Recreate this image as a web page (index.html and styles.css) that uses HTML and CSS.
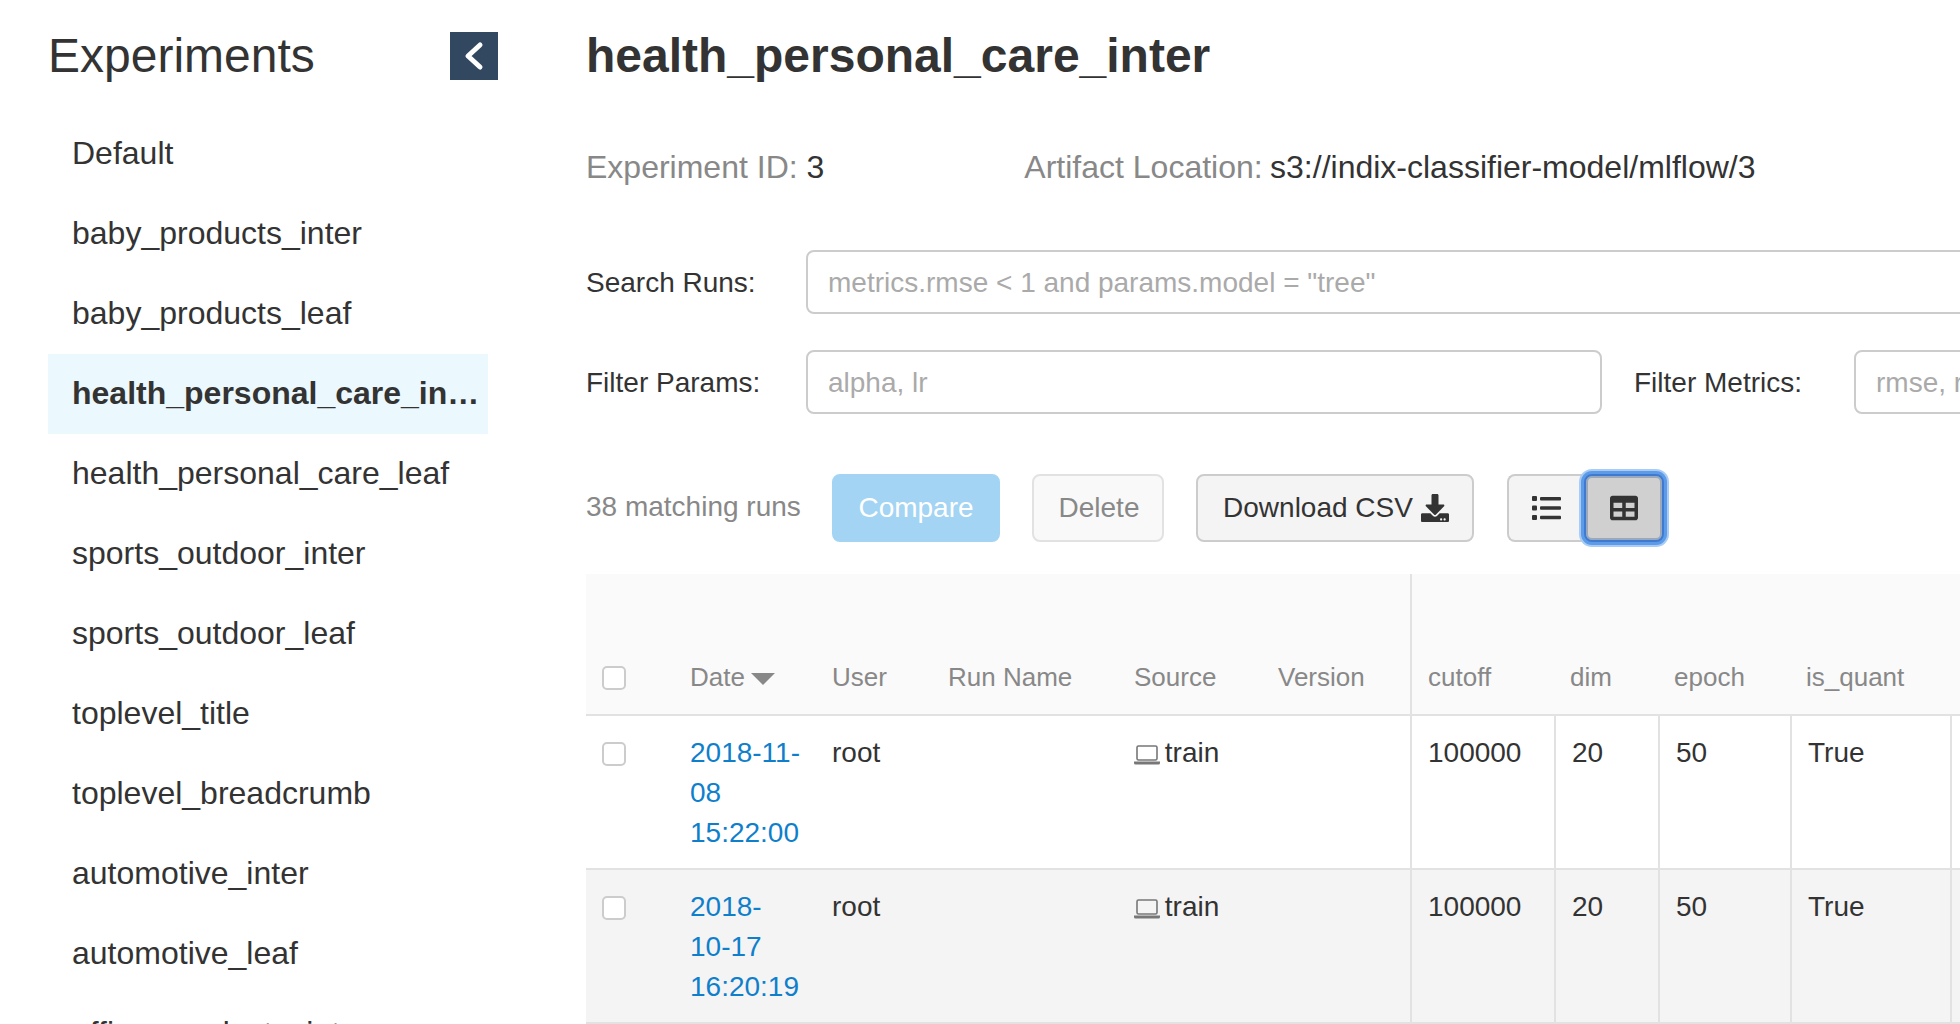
FILE: index.html
```html
<!DOCTYPE html>
<html lang="en">
<head>
    <meta charset="UTF-8">
    <title>MLflow Experiments</title>
    <link rel="stylesheet" href="styles.css">
</head>
<body>
<div class="app">
    <!-- Experiment list -->
    <aside class="sidebar">
        <div class="sidebar-head">
            <h2 class="sidebar-title">Experiments</h2>
            <button class="collapse-btn" type="button" aria-label="Collapse">
                <svg width="24" height="32" viewBox="0 0 24 32"><polyline points="18,5 6,16 18,27" fill="none" stroke="#fff" stroke-width="5" stroke-linecap="round" stroke-linejoin="round"/></svg>
            </button>
        </div>
        <ul class="experiment-list">
            <li>Default</li>
            <li>baby_products_inter</li>
            <li>baby_products_leaf</li>
            <li class="active">health_personal_care_inter</li>
            <li>health_personal_care_leaf</li>
            <li>sports_outdoor_inter</li>
            <li>sports_outdoor_leaf</li>
            <li>toplevel_title</li>
            <li>toplevel_breadcrumb</li>
            <li>automotive_inter</li>
            <li>automotive_leaf</li>
            <li>office_products_inter</li>
        </ul>
    </aside>

    <main class="main">
        <h1 class="title">health_personal_care_inter</h1>

        <div class="meta">
            <span class="meta-item"><span class="meta-label">Experiment ID:</span> 3</span>
            <span class="meta-item"><span class="meta-label artifact">Artifact Location:</span> s3://indix-classifier-model/mlflow/3</span>
        </div>

        <div class="search-row first">
            <label class="search-label" for="search">Search Runs:</label>
            <input class="text-input wide" id="search" type="text" placeholder='metrics.rmse &lt; 1 and params.model = "tree"'>
        </div>
        <div class="search-row">
            <label class="search-label" for="params">Filter Params:</label>
            <input class="text-input params" id="params" type="text" placeholder="alpha, lr">
            <label class="search-label metrics-label" for="metrics">Filter Metrics:</label>
            <input class="text-input metrics" id="metrics" type="text" placeholder="rmse, r2">
        </div>

        <div class="toolbar">
            <span class="match-count">38 matching runs</span>
            <button class="btn btn-compare" type="button">Compare</button>
            <button class="btn btn-delete" type="button">Delete</button>
            <button class="btn btn-download" type="button">Download CSV
                <svg class="download-icon" width="28" height="28" viewBox="0 0 512 512"><path fill="#333" d="M216 0h80c13.3 0 24 10.7 24 24v168h87.7c17.8 0 26.7 21.5 14.1 34.1L269.7 378.3c-7.5 7.5-19.8 7.5-27.3 0L90.1 226.1c-12.6-12.6-3.7-34.1 14.1-34.1H192V24c0-13.3 10.7-24 24-24zm296 376v112c0 13.3-10.7 24-24 24H24c-13.3 0-24-10.7-24-24V376c0-13.3 10.7-24 24-24h146.7l49 49c20.1 20.1 52.5 20.1 72.6 0l49-49H488c13.3 0 24 10.7 24 24zm-124 88c0-11-9-20-20-20s-20 9-20 20 9 20 20 20 20-9 20-20zm64 0c0-11-9-20-20-20s-20 9-20 20 9 20 20 20 20-9 20-20z"/></svg>
            </button>
            <div class="view-group">
                <button class="btn view-btn" type="button" aria-label="List view">
                    <svg width="29" height="24" viewBox="0 0 29 24" fill="#333"><rect x="0" y="0" width="5" height="5" rx="1"/><rect x="0" y="9.5" width="5" height="5" rx="1"/><rect x="0" y="19" width="5" height="5" rx="1"/><rect x="8" y="1" width="21" height="3.4" rx="1"/><rect x="8" y="10.3" width="21" height="3.4" rx="1"/><rect x="8" y="19.8" width="21" height="3.4" rx="1"/></svg>
                </button>
                <button class="btn view-btn focused" type="button" aria-label="Table view">
                    <svg width="28" height="28" viewBox="0 0 512 512"><path fill="#333" d="M464 32H48C21.49 32 0 53.49 0 80v352c0 26.51 21.49 48 48 48h416c26.51 0 48-21.49 48-48V80c0-26.51-21.49-48-48-48zM224 416H64v-96h160v96zm0-160H64v-96h160v96zm224 160H288v-96h160v96zm0-160H288v-96h160v96z"/></svg>
                </button>
            </div>
        </div>

        <table class="runs">
            <colgroup>
                <col class="c-check"><col class="c-date"><col class="c-user"><col class="c-name"><col class="c-source"><col class="c-version">
                <col class="c-cutoff"><col class="c-dim"><col class="c-epoch"><col class="c-quant"><col class="c-rest">
            </colgroup>
            <thead>
                <tr>
                    <th><input class="check" type="checkbox"></th>
                    <th>Date<span class="sort-arrow"></span></th>
                    <th>User</th>
                    <th>Run Name</th>
                    <th>Source</th>
                    <th>Version</th>
                    <th class="group-start">cutoff</th>
                    <th>dim</th>
                    <th>epoch</th>
                    <th>is_quant</th>
                    <th></th>
                </tr>
            </thead>
            <tbody>
                <tr>
                    <td><input class="check" type="checkbox"></td>
                    <td class="date"><a href="#">2018-11-08 15:22:00</a></td>
                    <td>root</td>
                    <td></td>
                    <td><svg class="laptop" width="26" height="20" viewBox="0 0 26 20"><rect x="3" y="1" width="20" height="14" rx="1.5" fill="none" stroke="#777" stroke-width="1.6"/><path fill="#777" d="M0 16.5h26v1.5a1.5 1.5 0 0 1-1.5 1.5h-23A1.5 1.5 0 0 1 0 18z"/></svg> train</td>
                    <td></td>
                    <td class="group-start">100000</td>
                    <td>20</td>
                    <td>50</td>
                    <td>True</td>
                    <td></td>
                </tr>
                <tr>
                    <td><input class="check" type="checkbox"></td>
                    <td class="date"><a href="#">2018-10-17 16:20:19</a></td>
                    <td>root</td>
                    <td></td>
                    <td><svg class="laptop" width="26" height="20" viewBox="0 0 26 20"><rect x="3" y="1" width="20" height="14" rx="1.5" fill="none" stroke="#777" stroke-width="1.6"/><path fill="#777" d="M0 16.5h26v1.5a1.5 1.5 0 0 1-1.5 1.5h-23A1.5 1.5 0 0 1 0 18z"/></svg> train</td>
                    <td></td>
                    <td class="group-start">100000</td>
                    <td>20</td>
                    <td>50</td>
                    <td>True</td>
                    <td></td>
                </tr>
            </tbody>
        </table>
    </main>
</div>
</body>
</html>
```

FILE: styles.css
```css
* {
    box-sizing: border-box;
}
html, body {
    margin: 0;
    height: 100%;
    overflow: hidden;
}
body {
    font-family: "Liberation Sans", Arial, sans-serif;
    color: #333;
    background-color: #fff;
}
.app {
    display: flex;
    height: 1024px;
    overflow: hidden;
}

/* Sidebar */
.sidebar {
    flex: 0 0 586px;
    padding: 32px 0 0 48px;
}
.sidebar-head {
    display: flex;
    justify-content: space-between;
    align-items: center;
    width: 450px;
    height: 48px;
    margin-bottom: 34px;
}
.sidebar-title {
    margin: 0;
    font-size: 48px;
    font-weight: normal;
    line-height: 48px;
}
.collapse-btn {
    display: flex;
    align-items: center;
    justify-content: center;
    width: 48px;
    height: 48px;
    padding: 0;
    border: none;
    background-color: #324760;
}
.experiment-list {
    list-style: none;
    margin: 0;
    padding: 0;
    width: 440px;
}
.experiment-list li {
    height: 80px;
    padding: 0 8px 0 24px;
    font-size: 32px;
    line-height: 78px;
    white-space: nowrap;
    overflow: hidden;
    text-overflow: ellipsis;
}
.experiment-list .active {
    font-weight: bold;
    background-color: #ebf8fd;
}

/* Main */
.main {
    flex: 1;
    min-width: 0;
    overflow: hidden;
}
.title {
    margin: 24px 0 0;
    font-size: 48px;
    font-weight: bold;
    line-height: 64px;
}
.meta {
    display: flex;
    gap: 200px;
    margin-top: 59px;
    font-size: 32px;
    line-height: 40px;
}
.meta-label {
    color: #888;
}
.meta-label.artifact {
    margin-right: -1.5px;
}
.search-row {
    display: flex;
    align-items: center;
    margin-top: 36px;
    white-space: nowrap;
}
.search-row.first {
    margin-top: 63px;
}
.search-label {
    flex: 0 0 220px;
    padding-top: 2px;
    font-size: 28px;
}
.metrics-label {
    margin-left: 32px;
}
.text-input {
    height: 64px;
    padding: 2px 20px 0;
    border: 2px solid #ccc;
    border-radius: 8px;
    font-family: inherit;
    font-size: 28px;
    color: #333;
    flex: none;
}
.text-input::placeholder {
    color: #aaa;
    opacity: 1;
}
.wide {
    width: 1300px;
}
.params {
    width: 796px;
}
.metrics {
    width: 400px;
}

/* Toolbar */
.toolbar {
    display: flex;
    align-items: center;
    gap: 32px;
    height: 68px;
    margin-top: 60px;
}
.match-count {
    flex: 0 0 214px;
    min-width: 0;
    padding-bottom: 2px;
    font-size: 28px;
    white-space: nowrap;
    color: #888;
}
.btn {
    height: 68px;
    padding: 0;
    border: 2px solid #ccc;
    border-radius: 8px;
    font-family: inherit;
    font-size: 28px;
    color: #333;
    background-color: #f4f4f4;
}
.btn-compare {
    width: 168px;
    border-color: #a3d4f3;
    color: #fff;
    background-color: #a3d4f3;
}
.btn-delete {
    width: 132px;
    padding-left: 2px;
    border-color: #e2e2e2;
    color: #888;
    background-color: #f9f9f9;
}
.btn-download {
    display: flex;
    align-items: center;
    justify-content: center;
    gap: 8px;
    width: 278px;
    padding-left: 2px;
}
.view-group {
    display: flex;
    margin-left: 1px;
}
.view-btn {
    display: flex;
    align-items: center;
    justify-content: center;
    width: 77px;
    border-radius: 8px 0 0 8px;
    border-right: none;
}
.view-btn.focused {
    width: 80px;
    border: 2px solid #3e7bd0;
    border-radius: 8px;
    background-color: #d0d0d0;
    box-shadow: inset 0 0 0 2px #9aa8bc, 0 0 0 3px #5b9be8, 0 0 0 5px #a8ccf5;
}

/* Runs table */
.runs {
    width: 1464px;
    margin-top: 32px;
    table-layout: fixed;
    border-collapse: separate;
    border-spacing: 0;
}
.c-check { width: 90px; }
.c-date { width: 142px; }
.c-user { width: 116px; }
.c-name { width: 186px; }
.c-source { width: 144px; }
.c-version { width: 146px; }
.c-cutoff { width: 144px; }
.c-dim { width: 104px; }
.c-epoch { width: 132px; }
.c-quant { width: 160px; }
.c-rest { width: 100px; }

.runs th {
    height: 142px;
    padding: 0 0 17px 16px;
    border-bottom: 2px solid #e2e2e2;
    font-size: 26px;
    font-weight: normal;
    line-height: 40px;
    text-align: left;
    vertical-align: bottom;
    white-space: nowrap;
    color: #888;
    background-color: #fafafa;
}
.runs td {
    padding: 17px 0 15px 16px;
    border-bottom: 2px solid #e2e2e2;
    border-left: 2px solid #e2e2e2;
    font-size: 28px;
    line-height: 40px;
    vertical-align: top;
}
.runs td:nth-child(-n+6) {
    padding-left: 14px;
    border-left: none;
}
.runs th:nth-child(-n+6) {
    padding-left: 14px;
}
.runs th.group-start {
    border-left: 2px solid #e2e2e2;
}
.runs tbody tr:nth-child(even) {
    background-color: #f4f4f4;
}
.runs th:first-child,
.runs td:first-child {
    padding-left: 16px;
}
.runs .date {
    padding-right: 17px;
}
.runs a {
    color: #0f7fcc;
    text-decoration: none;
}
.check {
    appearance: none;
    display: block;
    width: 24px;
    height: 24px;
    margin: 0;
    border: 2px solid #ccc;
    border-radius: 5px;
    background-color: #fff;
}
.runs td .check {
    margin-top: 9px;
}
.runs th .check {
    margin-bottom: 7px;
}
.sort-arrow {
    display: inline-block;
    width: 0;
    height: 0;
    margin-left: 6px;
    border-left: 12px solid transparent;
    border-right: 12px solid transparent;
    border-top: 12px solid #888;
    vertical-align: 1px;
}
.laptop {
    margin-right: -3px;
    vertical-align: -3px;
}
```
